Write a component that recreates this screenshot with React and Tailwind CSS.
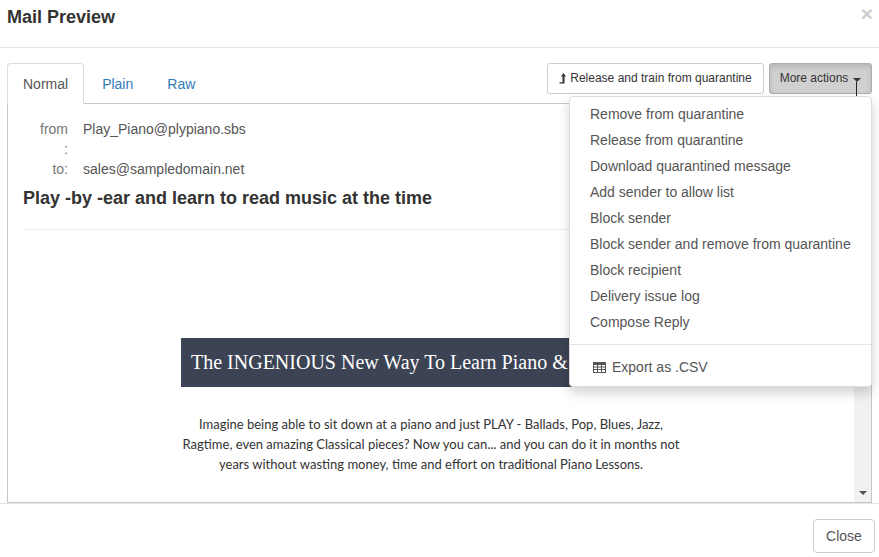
const menuItems = [
  "Remove from quarantine",
  "Release from quarantine",
  "Download quarantined message",
  "Add sender to allow list",
  "Block sender",
  "Block sender and remove from quarantine",
  "Block recipient",
  "Delivery issue log",
  "Compose Reply",
];

export default function App() {
  return (
    <div className="w-[879px] h-[557px] overflow-hidden bg-white flex flex-col text-[14px] leading-[20px] text-[#333] font-['Liberation_Sans',Arial,sans-serif]">
      {/* header */}
      <header className="h-[48px] shrink-0 border-b border-[#e5e5e5] flex justify-between pl-[7px] pr-[6px]">
        <h4 className="text-[18px] leading-[20px] font-bold mt-[7px]">Mail Preview</h4>
        <span className="text-[21px] leading-[21px] font-bold text-black opacity-20 mt-[3px]">×</span>
      </header>

      {/* body */}
      <main className="relative flex-1 min-h-0 flex flex-col pl-[7px] pr-[7px] pt-[15px]">
        <div className="h-[41px] shrink-0 flex justify-between items-start border-b border-[#c8c8c8]">
          <nav className="flex">
            <a className="h-[41px] px-[15px] pt-[10px] border border-[#ddd] border-b-white rounded-t-[4px] bg-white text-[#555]">Normal</a>
            <a className="ml-[2px] h-[40px] px-[16px] pt-[11px] text-[#337ab7]">Plain</a>
            <a className="ml-[2px] h-[40px] px-[16px] pt-[11px] text-[#337ab7]">Raw</a>
          </nav>
          <div className="flex gap-[5px]">
            <button className="h-[31px] w-[217px] pb-[1px] border border-[#ccc] rounded-[3px] bg-white text-[12px] leading-[18px] flex items-center justify-center gap-[4px]">
              <svg width="7" height="11" viewBox="0 0 7 11" fill="#333">
                <path d="M4.5 0 L7 3.5 H5.5 V10.5 H0.5 V9.3 H3.5 V3.5 H2 Z" />
              </svg>
              Release and train from quarantine
            </button>
            <button className="h-[31px] w-[103px] pb-[1px] border border-[#adadad] rounded-[3px] bg-[#d0d0d0] shadow-[inset_0_3px_5px_rgba(0,0,0,0.125)] text-[12px] leading-[18px] flex items-center justify-center gap-[5px]">
              More actions
              <span className="mt-[3px] w-0 h-0 border-x-[4px] border-x-transparent border-t-[4px] border-t-[#333]" />
            </button>
          </div>
        </div>

        <div className="flex-1 min-h-0 flex border-x border-b border-[#c8c8c8]">
          <section className="flex-1 min-w-0 pl-[15px] pr-[15px] pt-[15px]">
            <div className="grid grid-cols-[45px_1fr] gap-x-[15px] text-[#555]">
              <span className="pl-[15px] text-right text-[#777]">from :</span>
              <span>Play_Piano@plypiano.sbs</span>
              <span className="pl-[15px] text-right text-[#777]">to:</span>
              <span>sales@sampledomain.net</span>
            </div>
            <h3 className="mt-[9px] text-[18px] leading-[20px] font-bold">Play -by -ear and learn to read music at the time</h3>
            <hr className="mt-[21px] border-[#eee]" />
            <div className="mt-[108px] mx-auto w-[500px] h-[49px] bg-[#3c4354] text-white font-['Liberation_Serif',serif] text-[20px] leading-[49px] pl-[10px] whitespace-nowrap overflow-hidden">
              The INGENIOUS New Way To Learn Piano &amp;
            </div>
            <p className="mt-[27px] mx-auto w-[510px] text-center text-[13px] leading-[20px] font-['Lato',sans-serif] text-[#333]">
              Imagine being able to sit down at a piano and just PLAY - Ballads, Pop, Blues, Jazz, Ragtime, even amazing Classical pieces? Now you can... and you can do it in months not years without wasting money, time and effort on traditional Piano Lessons.
            </p>
          </section>
          <div className="w-[17px] shrink-0 bg-[#f1f1f1] flex flex-col justify-end items-center pb-[7px]">
            <span className="w-0 h-0 border-x-[4px] border-x-transparent border-t-[4px] border-t-[#505050]" />
          </div>
        </div>

        {/* dropdown */}
        <div className="absolute left-[569px] top-[48px] w-[303px] h-[291px] bg-white border border-[#ddd] rounded-[4px] shadow-[0_6px_12px_rgba(0,0,0,0.175)] pt-[4px]">
          {menuItems.map((item) => (
            <div key={item} className="h-[26px] pl-[20px] pt-[3px] text-[#555] whitespace-nowrap">{item}</div>
          ))}
          <div className="mt-[9px] border-t border-[#e5e5e5]" />
          <div className="mt-[12px] pl-[23px] flex items-center gap-[6px] text-[#555]">
            <svg width="13" height="11" viewBox="0 0 13 11" fill="none" stroke="#555" strokeWidth="1">
              <rect x="0.5" y="0.5" width="12" height="10" />
              <path d="M0.5 1.5H12.5M0.5 2.5H12.5M0.5 5H12.5M0.5 7.5H12.5M4.5 2.5V10.5M8.5 2.5V10.5" />
            </svg>
            Export as .CSV
          </div>
        </div>
        {/* mouse cursor */}
        <span className="absolute left-[856px] top-[34px] w-[1px] h-[14px] bg-[#222]" />
      </main>

      {/* footer */}
      <footer className="h-[54px] shrink-0 border-t border-[#e5e5e5] flex justify-end items-start pt-[15px] pr-[4px]">
        <button className="w-[62px] h-[34px] border border-[#ccc] rounded-[4px] bg-white text-[#555]">Close</button>
      </footer>
    </div>
  );
}
